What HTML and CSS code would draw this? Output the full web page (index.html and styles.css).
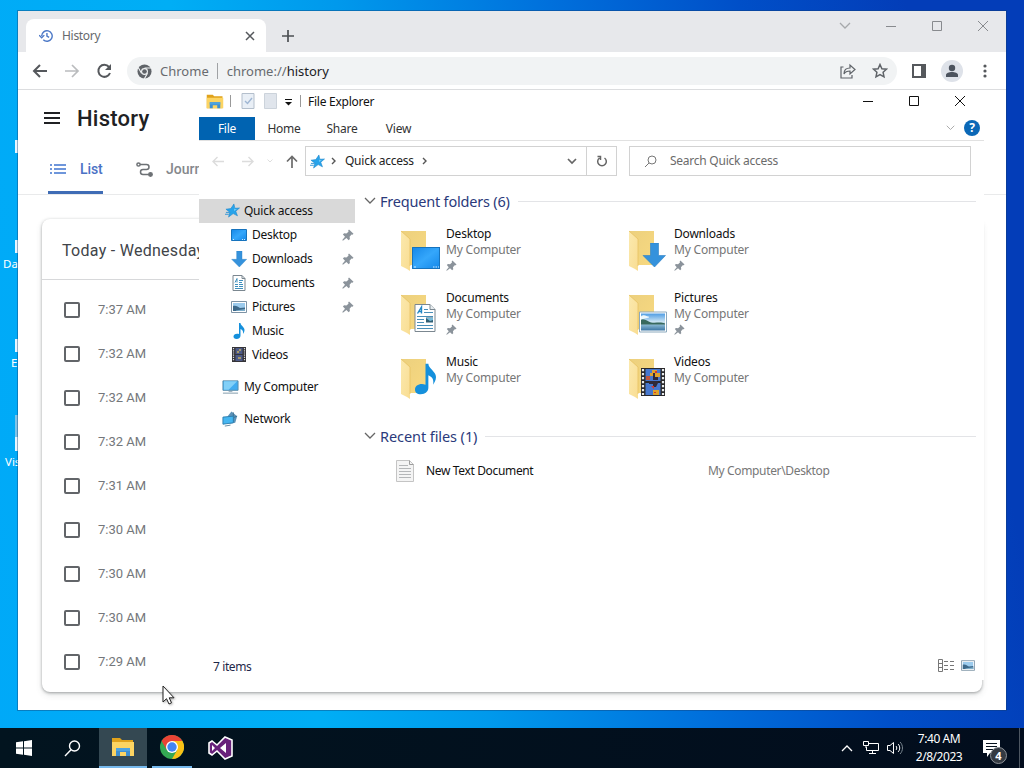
FILE: index.html
```html
<!DOCTYPE html>
<html lang="en">
<head>
    <meta charset="UTF-8">
    <meta name="viewport" content="width=device-width, initial-scale=1.0">
    <title>Desktop</title>
    <link rel="stylesheet" href="styles.css">
</head>
<body>
    <svg class="sprite" width="0" height="0">
        <defs>
            <linearGradient id="blue" x1="0" y1="0" x2="1" y2="1">
                <stop offset="0" stop-color="#1688e8"/><stop offset=".5" stop-color="#35a7fb"/><stop offset="1" stop-color="#1488ea"/>
            </linearGradient>
            <linearGradient id="yellow" x1="0" y1="0" x2="1" y2="1">
                <stop offset="0" stop-color="#ecd07e"/><stop offset="1" stop-color="#f8d980"/>
            </linearGradient>
            <linearGradient id="flap" x1="0" y1="0" x2="1" y2="1">
                <stop offset="0" stop-color="#fbe9ae"/><stop offset="1" stop-color="#f9dd92"/>
            </linearGradient>
            <linearGradient id="sky" x1="0" y1="0" x2="0" y2="1">
                <stop offset="0" stop-color="#4f9de4"/><stop offset=".5" stop-color="#cfe6f3"/><stop offset=".7" stop-color="#7fb0cd"/><stop offset="1" stop-color="#3c76a4"/>
            </linearGradient>
        </defs>
        <symbol id="explorer" viewBox="0 0 24 20">
            <path d="M1 1h8l2 2h11v16H1z" fill="#e0a21b"/>
            <path d="M1 5h22v14H1z" fill="#fcd462"/>
            <path d="M5 19v-8h14v8h-4v-4H9v4z" fill="#3f8fd0"/>
            <path d="M5 11h14v3H5z" fill="#4ea3e0"/>
        </symbol>
        <symbol id="star" viewBox="0 0 16 16">
            <path d="M9.500 1l1 4.600 5-.3-4 3.400 1.800 5-4.600-2.400L3.800 15l1.300-5.200L1 6.600l5.200-.7z" fill="#27a3ea" stroke="#1c86cb" stroke-width=".6"/>
            <path d="M9.500 3l.4 3.300 2.800.3-3 1.800z" fill="#70cbf8"/>
            <path d="M1 10h4M0 12h4" stroke="#2c93d6"/>
        </symbol>
        <symbol id="pin" viewBox="0 0 12 12">
            <path d="M7 .5l4.500 4.300-1 .9-1-.1-1.900 2.200.3 2.200-1.200 1.200-2.300-2.200L.9 11.700l-.6-.6 2.700-3.300L.9 5.500l1.200-1.200 2.300.2L6.500 2.700l-.3-1.200z" fill="#8b939b"/>
        </symbol>
        <symbol id="desktop" viewBox="0 0 28 22">
            <path d="M.5.500h27v21H.5z" fill="url(#blue)" stroke="#1673bd"/>
            <path d="M2 20h2M21 20h1.500M23.500 20H25M26 20h1" stroke="#cfeaff"/>
        </symbol>
        <symbol id="down" viewBox="0 0 24 24">
            <path d="M8.500 0h8v12.500h7L12.500 24 1 12.500h7.500z" fill="#3592dc" stroke="#2b80c5" stroke-width=".6"/>
        </symbol>
        <symbol id="document" viewBox="0 0 22 28">
            <path d="M1 .5h15l5 5v22H1z" fill="#fff" stroke="#7b8790"/>
            <path d="M16 .5v5h5" fill="#e8edf0" stroke="#7b8790"/>
            <path d="M3.500 9.500L7.500 3v6.500M5 7.500h3" fill="none" stroke="#2287c5" stroke-width="1.400"/>
            <path d="M10 5.500h4M10 8.500h9M3 12.500h16M3 15.500h7M3 18.500h7M3 21.500h16M3 24.500h16" stroke="#498eb8"/>
            <path d="M12 13.500h7v5h-7z" fill="#315f74"/>
            <path d="M12 14h7v2l-3 1z" fill="#7bbddc"/>
        </symbol>
        <symbol id="picture" viewBox="0 0 28 21">
            <path d="M.5.500h27v20H.5z" fill="#fff" stroke="#8ca9bd"/>
            <path d="M2 2h24v17H2z" fill="url(#sky)"/>
            <path d="M2 8c5-1 6 2 10 3 5 1 9-1 14 1v1H2z" fill="#38695d"/>
            <path d="M2 5c4-3 6 1 8 0v1l-8 2z" fill="#eff8fc"/>
        </symbol>
        <symbol id="picture-small" viewBox="0 0 16 12">
            <path d="M.5.500h15v11H.5z" fill="#fff" stroke="#7d93a5"/>
            <path d="M2 2h12v8H2z" fill="#9ccbed"/>
            <path d="M2 5c3-1 5 1 7 2l5-.5V10H2z" fill="#3d698a"/>
            <path d="M5 9.500l9-1.500v2H5z" fill="#7fb0cd"/>
        </symbol>
        <symbol id="note" viewBox="0 0 22 32">
            <path d="M11 0h3c0 5 8 8 8 14 0 4-2 6-3 8 1-6-1-8-5-10v13c0 4-3 7-8 7-4 0-6-2-6-5 0-4 5-7 11-5z" fill="#1590dc"/>
        </symbol>
        <symbol id="film" viewBox="0 0 24 28">
            <path d="M0 0h24v28H0z" fill="#29282b"/>
            <path d="M4.500 1h15v12h-15zM4.500 15h15v12h-15z" fill="#4778ce"/>
            <path d="M2 1v26M22 1v26" stroke="#e8ebec" stroke-width="2.200" stroke-dasharray="2.200 1.800"/>
            <path d="M11 2h5v3h3v4h-4v3h-3V8H9V5h2zM12 22h6v5h-6z" fill="#e0a32c"/>
            <path d="M5 8h4v4H5z" fill="#c0563d"/>
            <path d="M8 13h9v2l-2 4h-3v-3H8zM12 5h2v4h3v3h-5z" fill="#302a38"/>
            <path d="M14 3h2v2h-2zM13 24h2v1h-2zM10 18h3v3z" fill="#d7392b"/>
        </symbol>
        <symbol id="film-small" viewBox="0 0 14 15">
            <path d="M0 0h14v15H0z" fill="#343338"/>
            <path d="M3.500 1h7v6h-7zM3.500 8h7v6h-7z" fill="#4e5b87"/>
            <path d="M1.500 1v13M12.500 1v13" stroke="#dcdcdc" stroke-width="1.200" stroke-dasharray="1.200 1"/>
            <path d="M7 2h2v2H7zM5 4h2v2H5zM6 10h3v2H6z" fill="#a99a66"/>
        </symbol>
        <symbol id="folder" viewBox="0 0 28 42">
            <path d="M1 1h25v34H8z" fill="url(#yellow)"/>
            <path d="M1 1l9 8v32l-3-2-6-3z" fill="url(#flap)"/>
            <path d="M1 1l9 8v27" fill="none" stroke="#e5be5b" stroke-width=".7"/>
        </symbol>
        <symbol id="computer" viewBox="0 0 18 16">
            <path d="M1 1.500h16v10H1z" fill="#42acf0" stroke="#578ba9"/>
            <path d="M2 2h14L7 11H2z" fill="#82d0f8"/>
            <path d="M7 12.500h4M1 14.500h16" stroke="#7c98a8"/>
        </symbol>
        <symbol id="network" viewBox="0 0 18 16">
            <path d="M10 0l6 5-2 7-6 1-2-8z" fill="#5c92b8"/>
            <path d="M12 1v10M16 5l-8 3" fill="none" stroke="#3d718f"/>
            <path d="M1 6l11-1v7L1 13.500z" fill="#45b6f1" stroke="#2e7eae"/>
            <path d="M3 15.500l6-1" stroke="#64889e"/>
        </symbol>
        <symbol id="chevron" viewBox="0 0 12 8">
            <path d="M1 1l5 5 5-5" fill="none" stroke="currentColor" stroke-width="1.300"/>
        </symbol>
        <symbol id="minimize" viewBox="0 0 12 12"><path d="M1 6.500h10" stroke="currentColor"/></symbol>
        <symbol id="maximize" viewBox="0 0 12 12"><path d="M1.500 1.500h9v9h-9z" fill="none" stroke="currentColor"/></symbol>
        <symbol id="close" viewBox="0 0 12 12"><path d="M1 1l10 10M11 1L1 11" stroke="currentColor"/></symbol>
    </svg>

    <div class="desktop">
        <span class="shortcut chrome-link"></span>
        <span class="shortcut database">Da</span>
        <span class="shortcut edge">E</span>
        <span class="shortcut studio">Vis</span>

        <div class="browser">
            <div class="tab-strip">
                <div class="tab">
                    <svg width="15" height="14" viewBox="0 0 17 16" fill="none" stroke="#4d79c7" stroke-width="1.600"><path d="M3 8a6 6 0 1 1 1.800 4.300M0 7l3 3 3-3M9 4.500V8l2.500 1.500"/></svg>
                    <span>History</span>
                    <svg class="tab-close" width="10" height="10" viewBox="0 0 10 10"><path d="M1 1l8 8M9 1L1 9" stroke="#55585c" stroke-width="1.500"/></svg>
                </div>
                <svg class="new-tab" width="14" height="14" viewBox="0 0 14 14"><path d="M7 1v12M1 7h12" stroke="#4c4f53" stroke-width="1.700"/></svg>
                <div class="window-buttons browser-buttons">
                    <svg class="tab-search" width="12" height="8"><use href="#chevron"/></svg>
                    <svg width="12" height="12"><use href="#minimize"/></svg>
                    <svg width="12" height="12"><use href="#maximize"/></svg>
                    <svg width="12" height="12"><use href="#close"/></svg>
                </div>
            </div>
            <div class="browser-toolbar">
                <svg width="16" height="16" viewBox="0 0 16 16" fill="none" stroke="#55585c" stroke-width="2"><path d="M15 8H2M8 2L2 8l6 6"/></svg>
                <svg width="16" height="16" viewBox="0 0 16 16" fill="none" stroke="#babcbe" stroke-width="1.700"><path d="M1 8h13M8 2l6 6-6 6"/></svg>
                <svg width="16" height="16" viewBox="0 0 16 16"><path d="M13 4a6 6 0 1 0 1 6" fill="none" stroke="#55585c" stroke-width="2"/><path d="M15 1v6H9z" fill="#55585c"/></svg>
                <div class="omnibox">
                    <svg width="15" height="15" viewBox="0 0 16 16"><circle cx="8" cy="8" r="7.500" fill="#5f6368"/><path d="M8 4.300h7M4.800 9.800L1.300 3.700M11.200 9.800L7.700 16" stroke="#f1f3f4" stroke-width="1.200"/><circle cx="8" cy="8" r="3.700" fill="#f1f3f4"/><circle cx="8" cy="8" r="2.500" fill="#5f6368"/></svg>
                    <span class="site">Chrome</span>
                    <span class="url">chrome://<b>history</b></span>
                    <svg class="share" width="16" height="16" viewBox="0 0 16 16" fill="none" stroke="#5f6368" stroke-width="1.200"><path d="M3.500 4H1v11h11v-3M4 11c0-4 2-6 6-6V2l5 4.500-5 4.500V8c-3 0-5 1-6 3z"/></svg>
                    <svg width="16" height="16" viewBox="0 0 16 16" fill="none" stroke="#5f6368" stroke-width="1.500"><path d="M8 1.500l1.900 4.200 4.600.5-3.400 3.100.9 4.500L8 11.500l-4 2.300.9-4.500-3.400-3.100 4.600-.5z"/></svg>
                </div>
                <svg class="side-panel" width="14" height="14" viewBox="0 0 14 14"><path d="M0 0h14v14H0z" fill="#55585c"/><path d="M2 2h7v10H2z" fill="#fff"/></svg>
                <svg class="avatar" width="22" height="22" viewBox="0 0 22 22"><circle cx="11" cy="11" r="11" fill="#dee2e9"/><circle cx="11" cy="8" r="3.200" fill="#4c535e"/><path d="M5 17v-2c0-4 12-4 12 0v2z" fill="#4c535e"/></svg>
                <svg class="menu-dots" width="4" height="14" viewBox="0 0 4 14" fill="#55585c"><circle cx="2" cy="2" r="1.600"/><circle cx="2" cy="7" r="1.600"/><circle cx="2" cy="12" r="1.600"/></svg>
            </div>
            <div class="page">
                <div class="page-title">
                    <svg width="16" height="12" viewBox="0 0 16 12"><path d="M0 1h16M0 6h16M0 11h16" stroke="#202124" stroke-width="2"/></svg>
                    <h1>History</h1>
                </div>
                <div class="page-tabs">
                    <div class="page-tab active">
                        <svg width="16" height="10" viewBox="0 0 16 10" stroke="#3f74cf" stroke-width="1.600"><path d="M0 1h2M4 1h12M0 5h2M4 5h12M0 9h2M4 9h12"/></svg>
                        <span>List</span>
                    </div>
                    <div class="page-tab">
                        <svg width="17" height="15" viewBox="0 0 17 15" fill="none" stroke="#6d7175" stroke-width="1.500"><circle cx="2.500" cy="2.500" r="1.600"/><path d="M4 2.500h6.500a2.400 2.400 0 0 1 0 5H7a2.400 2.400 0 0 0 0 5h6"/><circle cx="14.500" cy="12.500" r="1.700" fill="#6d7175"/></svg>
                        <span>Journeys</span>
                    </div>
                </div>
                <div class="history-card">
                    <h2>Today - Wednesday</h2>
                    <ul id="visits"></ul>
                </div>
            </div>
        </div>

        <div class="file-explorer">
            <div class="title-bar">
                <svg width="18" height="15"><use href="#explorer"/></svg>
                <i class="divider"></i>
                <svg class="properties" width="14" height="16" viewBox="0 0 14 16"><path d="M1 .5h12v15H1z" fill="#e9eff6" stroke="#b4bfcc"/><path d="M4 8l2.500 2.500L11 5" fill="none" stroke="#9fb6d3" stroke-width="1.400"/></svg>
                <svg class="new-folder" width="13" height="16" viewBox="0 0 13 16"><path d="M.5.500h12v15H.5z" fill="#e0e5ec" stroke="#ccd3db"/></svg>
                <svg class="customize" width="7" height="7" viewBox="0 0 7 7"><path d="M0 .5h7" stroke="#111"/><path d="M0 3h7L3.500 6.500z" fill="#111"/></svg>
                <i class="divider"></i>
                <span>File Explorer</span>
                <div class="window-buttons">
                    <svg width="12" height="12"><use href="#minimize"/></svg>
                    <svg width="12" height="12"><use href="#maximize"/></svg>
                    <svg width="12" height="12"><use href="#close"/></svg>
                </div>
            </div>
            <div class="ribbon">
                <span class="file">File</span>
                <span>Home</span>
                <span>Share</span>
                <span class="view">View</span>
                <svg class="expand" width="9" height="6"><use href="#chevron"/></svg>
                <b class="help">?</b>
            </div>
            <div class="address-row">
                <svg width="13" height="11" viewBox="0 0 13 11" fill="none" stroke="#dcdcdc" stroke-width="1.400"><path d="M12 5.500H1M5.500 1L1 5.500 5.500 10"/></svg>
                <svg width="13" height="11" viewBox="0 0 13 11" fill="none" stroke="#dcdcdc" stroke-width="1.400"><path d="M1 5.500h11M7.500 1L12 5.500 7.500 10"/></svg>
                <svg class="recent" width="6" height="4"><use href="#chevron"/></svg>
                <svg width="12" height="13" viewBox="0 0 12 13" fill="none" stroke="#6b6b6b" stroke-width="1.700"><path d="M6 13V1.500M1 6.500l5-5 5 5"/></svg>
                <div class="address">
                    <svg width="15" height="15"><use href="#star"/></svg>
                    <svg class="crumb" width="8" height="6" viewBox="0 0 8 6"><path d="M1 1l3 3 3-3" fill="none" stroke="#555" stroke-width="1.400"/></svg>
                    <span>Quick access</span>
                    <svg class="crumb" width="8" height="6" viewBox="0 0 8 6"><path d="M1 1l3 3 3-3" fill="none" stroke="#555" stroke-width="1.400"/></svg>
                    <svg class="history-arrow" width="10" height="7" viewBox="0 0 10 7"><path d="M1 1l4 4 4-4" fill="none" stroke="#666" stroke-width="1.700"/></svg>
                    <div class="refresh">
                        <svg width="11" height="12" viewBox="0 0 11 12" fill="none" stroke="#666" stroke-width="1.500"><path d="M8.500 3a4.300 4.300 0 1 1-5 0M1.500 1.500h3v3.500"/></svg>
                    </div>
                </div>
                <div class="search">
                    <svg width="13" height="13" viewBox="0 0 13 13" fill="none" stroke="#777"><circle cx="8" cy="5" r="4"/><path d="M5 8l-4 4"/></svg>
                    <span>Search Quick access</span>
                </div>
            </div>
            <div class="explorer-body">
                <nav>
                    <a class="root selected"><svg width="15" height="15"><use href="#star"/></svg>Quick access</a>
                    <a><svg width="16" height="12" viewBox="0 0 16 12"><path d="M.5.500h15v11H.5z" fill="url(#blue)" stroke="#1673bd"/><path d="M2 10.500h1M11 10.500h1M13 10.500h1" stroke="#cfeaff"/></svg>Desktop<svg class="pin" width="12" height="12"><use href="#pin"/></svg></a>
                    <a><svg width="16" height="16"><use href="#down"/></svg>Downloads<svg class="pin" width="12" height="12"><use href="#pin"/></svg></a>
                    <a><svg width="16" height="16" viewBox="0 0 16 16"><path d="M2 .5h9l3 3v12H2z" fill="#fff" stroke="#7b8790"/><path d="M11 .5v3h3" fill="none" stroke="#7b8790"/><path d="M4 7.500L6 3.500v4M8 5.500h4M4 9.500h3M8 9.500h4M4 11.500h3M8 11.500h4M4 13.500h8M8 7.500h3" fill="none" stroke="#3f8fbd"/></svg>Documents<svg class="pin" width="12" height="12"><use href="#pin"/></svg></a>
                    <a><svg width="16" height="12"><use href="#picture-small"/></svg>Pictures<svg class="pin" width="12" height="12"><use href="#pin"/></svg></a>
                    <a><svg width="16" height="16"><use href="#note"/></svg>Music</a>
                    <a><svg width="16" height="15"><use href="#film-small"/></svg>Videos</a>
                    <a class="device"><svg width="17" height="16"><use href="#computer"/></svg>My Computer</a>
                    <a class="device"><svg width="17" height="16"><use href="#network"/></svg>Network</a>
                </nav>
                <main>
                    <h3><svg width="12" height="8"><use href="#chevron"/></svg>Frequent folders (6)</h3>
                    <div class="folders" id="folders"></div>
                    <h3 class="recent-title"><svg width="12" height="8"><use href="#chevron"/></svg>Recent files (1)</h3>
                    <div class="recent-file">
                        <svg width="18" height="22" viewBox="0 0 18 22"><path d="M.5.500h13l4 4v17H.5z" fill="#f4f4f4" stroke="#c4c4c4"/><path d="M13.500.500v4h4" fill="none" stroke="#9d9d9d"/><path d="M3 5.500h9M3 8.500h12M3 11.500h12M3 14.500h12M3 17.500h12" stroke="#b4b6b8"/></svg>
                        <span>New Text Document</span>
                        <span class="path">My Computer\Desktop</span>
                    </div>
                </main>
            </div>
            <div class="status-bar">
                <span>7 items</span>
                <svg width="17" height="13" viewBox="0 0 17 13" fill="none" stroke="#777"><path d="M.5.500h4v12h-4zM.5 4.500h4M.5 8.500h4"/><path d="M6 2.500h10M6 6.500h10M6 10.500h10" stroke-dasharray="4 2"/></svg>
                <svg width="14" height="11"><use href="#picture-small"/></svg>
            </div>
        </div>

        <svg class="cursor" width="14" height="20" viewBox="0 0 14 20"><path d="M1 1v16l3.500-3.300L7 19l2.500-1.200-2.300-5H12z" fill="#fff" stroke="#222"/></svg>

        <div class="taskbar">
            <div class="task"><svg width="16" height="16" viewBox="0 0 16 16" fill="#fff"><path d="M0 2.300l7-1v6.200H0zM8 1.200L16 0v7.500H8zM0 8.500h7v6.200l-7-1zM8 8.500h8V16l-8-1.200z"/></svg></div>
            <div class="task"><svg width="17" height="17" viewBox="0 0 17 17" fill="none" stroke="#fff" stroke-width="1.400"><circle cx="10.500" cy="6" r="5"/><path d="M7 9.700L1 16"/></svg></div>
            <div class="task open focused"><svg width="24" height="20"><use href="#explorer"/></svg></div>
            <div class="task open">
                <svg width="24" height="24" viewBox="0 0 24 24">
                    <circle cx="12" cy="12" r="12" fill="#34a853"/>
                    <path d="M1.600 6A12 12 0 0 1 22.400 6H12l-5.200 9z" fill="#ea4335"/>
                    <path d="M22.400 6A12 12 0 0 1 12 24l5.200-9L12 6z" fill="#fbc116"/>
                    <circle cx="12" cy="12" r="6" fill="#fff"/><circle cx="12" cy="12" r="4.700" fill="#4285f4"/>
                </svg>
            </div>
            <div class="task">
                <svg width="25" height="24" viewBox="0 0 25 24"><path d="M17 1l7 3v16l-7 3-8-8-5 4-3-2V7l3-2 5 4z" fill="#68217a" stroke="#fff" stroke-width="1.600"/><path d="M4 9v6l3-3zM12 12l6-5v10z" fill="#fff"/></svg>
            </div>
            <div class="tray">
                <svg class="hidden-icons" width="12" height="8"><use href="#chevron"/></svg>
                <svg class="lan" width="16" height="14" viewBox="0 0 16 14" fill="none" stroke="#fff"><path d="M6 2.500h9.500v7H3.500V6M9.500 9.500v3M6 12.500h7M.5.500h5v4h-5zM3 5v2"/></svg>
                <svg class="volume" width="16" height="14" viewBox="0 0 16 14" fill="none" stroke="#fff"><path d="M.5 4.500H3l3.500-3v11L3 9.500H.5zM9 5c1 1 1 3 0 4M11 3c2.300 2 2.300 6 0 8"/><path d="M13 1c3.300 3 3.300 9 0 12" stroke="#7b8790"/></svg>
                <div class="clock">7:40 AM<br>2/8/2023</div>
                <div class="notifications">
                    <svg width="17" height="17" viewBox="0 0 17 17"><path d="M0 0h17v13H7l-3 4v-4H0z" fill="#fff"/><path d="M3 3.500h11M3 6.500h11M3 9.500h7" stroke="#08131f"/></svg>
                    <b>4</b>
                </div>
                <i class="show-desktop"></i>
            </div>
        </div>
    </div>

    <script>
        const visits = ['7:37 AM', '7:32 AM', '7:32 AM', '7:32 AM', '7:31 AM', '7:30 AM', '7:30 AM', '7:30 AM', '7:29 AM'];
        const folders = [
            { name: 'Desktop', icon: 'desktop', pinned: true },
            { name: 'Downloads', icon: 'down', pinned: true },
            { name: 'Documents', icon: 'document', pinned: true },
            { name: 'Pictures', icon: 'picture', pinned: true },
            { name: 'Music', icon: 'note', pinned: false },
            { name: 'Videos', icon: 'film', pinned: false }
        ];

        document.getElementById('visits').innerHTML = visits.map(time =>
            `<li><i class="checkbox"></i><span>${time}</span></li>`
        ).join('');

        document.getElementById('folders').innerHTML = folders.map(folder => `
            <div class="folder">
                <div class="folder-icon">
                    <svg class="base"><use href="#folder"/></svg>
                    <svg class="overlay ${folder.icon}"><use href="#${folder.icon}"/></svg>
                </div>
                <div>
                    <p>${folder.name}</p>
                    <p class="location">My Computer</p>
                    ${folder.pinned ? '<svg class="pin" width="11" height="11"><use href="#pin"/></svg>' : ''}
                </div>
            </div>
        `).join('');
    </script>
</body>
</html>
```
FILE: styles.css
```css
* {
    box-sizing: border-box;
}
body {
    margin: 0;
    font-family: "Noto Sans", "Open Sans", sans-serif;
    font-size: 12px;
    color: #111;
}
h1, h2, h3, p, ul {
    margin: 0;
    padding: 0;
    font-weight: 400;
}
svg {
    display: block;
    flex-shrink: 0;
}
.sprite {
    position: absolute;
}
.desktop {
    position: relative;
    width: 1024px;
    height: 768px;
    overflow: hidden;
    background: linear-gradient(78deg, #00a9f8 0%, #00aef5 28%, #0099ec 42%, #0070dc 60%, #004fc8 76%, #033db8 90%);
}

/* desktop shortcuts behind the browser */
.shortcut {
    position: absolute;
    left: 3px;
    color: #fff;
    font-size: 11.5px;
    line-height: 16px;
}
.shortcut::before {
    content: "";
    position: absolute;
    left: 12px;
    bottom: 19px;
    width: 3px;
    height: 13px;
    background: #e8f6ff;
}
.chrome-link {
    top: 172px;
}
.database {
    top: 256px;
}
.edge {
    top: 355px;
    left: 11px;
}
.edge::before {
    left: 4px;
}
.studio {
    top: 454px;
    left: 5px;
}
.studio::before {
    left: 10px;
    height: 36px;
    background: linear-gradient(#7fc4e8 60%, #e8f6ff 60%);
}

/* browser */
.browser {
    position: absolute;
    left: 18px;
    top: 11px;
    width: 988px;
    height: 699px;
    background: #fff;
    box-shadow: 0 0 0 1px rgba(20, 60, 110, .4);
    overflow: hidden;
}
.tab-strip {
    display: flex;
    height: 41px;
    padding-left: 8px;
    background: #e7e8eb;
}
.tab {
    display: flex;
    align-items: center;
    width: 240px;
    height: 33px;
    margin-top: 8px;
    padding: 0 11px 0 13px;
    border-radius: 8px 8px 0 0;
    background: #fff;
    color: #66696d;
    letter-spacing: -.3px;
}
.tab span {
    margin-left: 8px;
}
.tab-close {
    margin-left: auto;
}
.new-tab {
    margin: 18px 0 0 15px;
}
.window-buttons {
    display: flex;
    align-items: center;
    gap: 34px;
    margin-left: auto;
}
.browser-buttons {
    height: 29px;
    padding-right: 17px;
    color: #888a8e;
}
.tab-search {
    color: #a6a8ab;
}
.browser-toolbar {
    display: flex;
    align-items: center;
    gap: 16px;
    height: 38px;
    padding: 0 19px 0 14px;
}
.omnibox {
    display: flex;
    align-items: center;
    flex: 1;
    height: 28px;
    margin-left: -1px;
    padding: 0 9px 0 10px;
    border-radius: 14px;
    background: #f1f3f4;
    font-size: 13px;
    color: #686b6f;
}
.omnibox .site {
    margin-left: 8px;
    padding-right: 8px;
    border-right: 1px solid #a0a2a5;
    line-height: 16px;
}
.omnibox .url {
    margin-left: 9px;
}
.omnibox b {
    font-weight: 400;
    color: #202124;
}
.share {
    margin: 0 16px 0 auto;
}
.side-panel, .avatar {
    margin-left: -1px;
}
.menu-dots {
    margin-left: 4px;
}
.page {
    height: 621px;
    margin-top: -1px;
    border-top: 1px solid #dcdddf;
    font-family: Roboto, sans-serif;
    background: #fff;
}
.page-title {
    display: flex;
    align-items: center;
    height: 56px;
    padding-left: 26px;
    gap: 17px;
}
.page-title h1 {
    font-size: 22px;
    font-weight: 500;
    letter-spacing: .25px;
    color: #202124;
}
.page-tabs {
    display: flex;
    gap: 33px;
    height: 49px;
    padding-left: 30px;
    border-bottom: 1px solid #e9eaeb;
}
.page-tab {
    display: flex;
    align-items: center;
    gap: 13px;
    padding-bottom: 2px;
    font-size: 14px;
    font-weight: 500;
    color: #85888c;
}
.page-tab.active {
    width: 55px;
    padding: 1px 0 0 2px;
    gap: 14px;
    border-bottom: 3px solid #3f6cb5;
    color: #4b72c5;
    letter-spacing: -.1px;
}
.history-card {
    width: 940px;
    height: 473px;
    margin: 24px 0 0 24px;
    border-radius: 8px;
    background: #fff;
    box-shadow: 0 1px 3px rgba(60, 64, 67, .45), 0 3px 7px rgba(60, 64, 67, .12);
}
.history-card h2 {
    height: 61px;
    padding-left: 20px;
    border-bottom: 1px solid #d7d8da;
    font-size: 16px;
    line-height: 63px;
    letter-spacing: .28px;
    color: #414449;
}
.history-card ul {
    padding-top: 8px;
    list-style: none;
}
.history-card li {
    display: flex;
    align-items: center;
    gap: 18px;
    height: 44px;
    padding-left: 22px;
    font-size: 13px;
    color: #74777b;
}
.history-card li span {
    padding-bottom: 1px;
}
.checkbox {
    width: 16px;
    height: 16px;
    border: 2px solid #626569;
    border-radius: 2px;
}

/* file explorer */
.file-explorer {
    position: absolute;
    left: 199px;
    top: 90px;
    display: flex;
    flex-direction: column;
    width: 785px;
    height: 590px;
    background: #fff;
    letter-spacing: -.25px;
}
.title-bar {
    display: flex;
    align-items: center;
    height: 27px;
    padding: 0 18px 5px 7px;
}
.title-bar .divider {
    width: 1px;
    height: 12px;
    margin: 0 7px 0 6px;
    background: #999;
}
.properties {
    margin-left: 3px;
}
.new-folder {
    margin-left: 9px;
}
.customize {
    margin: 3px 2px 0 8px;
}
.ribbon {
    display: flex;
    height: 24px;
    border-bottom: 1px solid #e1e1e1;
    line-height: 24px;
    color: #333;
}
.ribbon span {
    width: 58px;
    text-align: center;
}
.ribbon .file {
    width: 56px;
    height: 23px;
    background: #0063b1;
    color: #fff;
}
.ribbon .view {
    width: 55px;
}
.expand {
    margin: 8px 9px 0 auto;
    color: #aaa;
}
.help {
    width: 16px;
    height: 16px;
    margin: 3px 4px 0 0;
    border-radius: 8px;
    background: #0b68b7;
    color: #fff;
    line-height: 16px;
    text-align: center;
}
.address-row {
    display: flex;
    align-items: center;
    height: 30px;
    margin: 5px 13px 0 13px;
}
.address-row > svg {
    margin-right: 16px;
}
.address-row > .recent {
    margin: 0 14px 0 -3px;
    color: #ccc;
}
.address-row > .recent + svg {
    margin: 1px 7px 0 -1px;
}
.address, .search {
    display: flex;
    align-items: center;
    height: 30px;
    border: 1px solid #d2d2d2;
}
.address {
    width: 312px;
    padding-left: 4px;
    color: #222;
}
.crumb {
    margin: 0 7px 0 5px;
    transform: rotate(-90deg);
}
.address span + .crumb {
    margin-left: 7px;
}
.address span, .search span {
    padding-bottom: 1px;
}
.history-arrow {
    margin: 0 9px 0 auto;
}
.refresh {
    display: flex;
    align-items: center;
    justify-content: center;
    width: 30px;
    height: 28px;
    border-left: 1px solid #d2d2d2;
}
.search {
    flex: 1;
    margin-left: 12px;
    padding-left: 14px;
    gap: 13px;
    color: #6b6b6b;
}
.explorer-body {
    display: flex;
    flex: 1;
    padding-top: 12px;
}
nav {
    width: 156px;
    padding-top: 11px;
}
nav a {
    display: flex;
    align-items: center;
    gap: 6px;
    height: 24px;
    padding: 0 1px 1px 32px;
    gap: 5px;
}
nav a.root {
    padding-left: 26px;
    gap: 4px;
}
nav a.device {
    margin-top: 8px;
    padding-left: 23px;
    gap: 5px;
}
nav a.selected {
    background: #d9d9d9;
}
nav .pin {
    margin-left: auto;
}
main {
    flex: 1;
    padding-left: 10px;
}
main h3 {
    display: flex;
    align-items: center;
    gap: 4px;
    height: 26px;
    margin-right: 8px;
    font-size: 14.500px;
    letter-spacing: -.2px;
    color: #2b3a7b;
}
main h3 svg {
    margin-left: -1px;
    color: #666;
}
main h3::after {
    content: "";
    flex: 1;
    height: 1px;
    margin-left: 4px;
    background: #e3e4e7;
}
main .recent-title {
    letter-spacing: -.08px;
}
.folders {
    display: grid;
    grid-template-columns: 228px 228px;
    grid-auto-rows: 64px;
    margin: 12px 0 5px 35px;
}
.folder {
    display: flex;
    line-height: 16px;
    letter-spacing: -.2px;
}
.folder-icon {
    position: relative;
    width: 46px;
}
.base {
    width: 28px;
    height: 42px;
    margin-top: 4px;
}
.overlay {
    position: absolute;
    left: 12px;
    top: 21px;
    width: 28px;
    height: 22px;
}
.overlay.down {
    left: 14px;
    top: 17px;
    width: 24px;
    height: 24px;
}
.overlay.document {
    left: 14px;
    top: 14px;
    width: 22px;
    height: 28px;
}
.overlay.picture {
    left: 11px;
}
.overlay.note {
    left: 15px;
    top: 9px;
    width: 21px;
    height: 32px;
}
.overlay.film {
    left: 13px;
    top: 14px;
    width: 24px;
    height: 28px;
}
.location {
    color: #767676;
}
.folder .pin {
    margin-top: 2px;
}
.recent-file {
    display: flex;
    align-items: center;
    height: 26px;
    margin: 9px 0 0 31px;
}
.recent-file span {
    width: 282px;
    margin-left: 12px;
    padding-bottom: 1px;
    letter-spacing: -.35px;
}
.recent-file .path {
    width: auto;
    margin-left: 0;
    color: #777;
}
.status-bar {
    display: flex;
    align-items: center;
    gap: 6px;
    height: 27px;
    padding: 0 9px 2px 14px;
}
.status-bar span {
    margin-right: auto;
    padding-top: 2px;
    color: #1e2848;
    letter-spacing: -.4px;
}
.cursor {
    position: absolute;
    left: 162px;
    top: 685px;
    filter: drop-shadow(1px 1px 1px rgba(0, 0, 0, .3));
}

/* taskbar */
.taskbar {
    position: absolute;
    left: 0;
    bottom: 0;
    display: flex;
    width: 100%;
    height: 40px;
    background: linear-gradient(90deg, #02141f, #020d1d);
    color: #fff;
}
.task {
    display: flex;
    align-items: center;
    justify-content: center;
    width: 48px;
    height: 40px;
}
.task.open {
    width: 40px;
    margin: 0 4px 0 5px;
    border-bottom: 2px solid #76b9ed;
}
.task.open.focused {
    width: 48px;
    margin: 0 0 0 3px;
    background: #344852;
}
.tray {
    display: flex;
    align-items: center;
    margin-left: auto;
    padding-right: 4px;
}
.hidden-icons {
    transform: rotate(180deg);
}
.lan {
    margin-left: 10px;
}
.volume {
    margin-left: 8px;
}
.clock {
    width: 72px;
    line-height: 18px;
    text-align: center;
    letter-spacing: -.45px;
}
.notifications {
    position: relative;
    margin-left: 8px;
}
.notifications b {
    position: absolute;
    left: 7px;
    top: 7px;
    width: 17px;
    height: 17px;
    border: 1px solid #8d9298;
    border-radius: 9px;
    background: #343a42;
    font-size: 11px;
    line-height: 15px;
    text-align: center;
}
.show-desktop {
    width: 1px;
    height: 40px;
    margin-left: 19px;
    background: #4d5661;
}
```
